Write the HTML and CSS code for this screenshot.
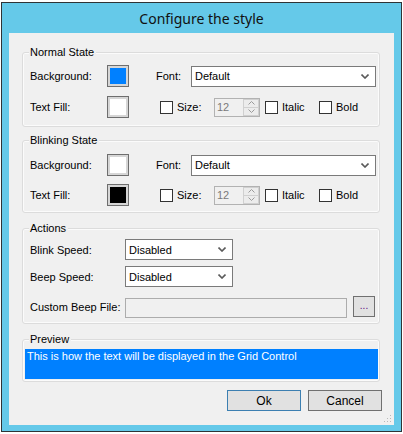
FILE: index.html
```html
<!DOCTYPE html>
<html>
<head>
<meta charset="utf-8">
<link rel="stylesheet" href="styles.css">
</head>
<body>
<div class="window">
  <div class="title">Configure the style</div>
  <div class="content">
    <div class="group g-normal">
      <span class="legend">Normal State</span>
      <div class="row">
        <span class="lbl">Background:</span>
        <span class="swatch"><span class="fill blue"></span></span>
        <span class="font-lbl">Font:</span>
        <span class="combo font-combo"><span class="ctext">Default</span><svg class="chev" width="8" height="5" viewBox="0 0 8 5"><path d="M0.5 0.5 L4 4 L7.5 0.5" fill="none" stroke="#5a5a5a" stroke-width="1.6"/></svg></span>
      </div>
      <div class="row">
        <span class="lbl">Text Fill:</span>
        <span class="swatch"><span class="fill white"></span></span>
        <span class="chk c-size"></span><span class="clbl w-size">Size:</span>
        <span class="spin"><span class="stext">12</span><span class="sbtns"><span class="sb"><svg width="7" height="4" viewBox="0 0 7 4"><path d="M0.5 3.5 L3.5 0.5 L6.5 3.5" fill="none" stroke="#9a9a9a" stroke-width="1"/></svg></span><span class="sb"><svg width="7" height="4" viewBox="0 0 7 4"><path d="M0.5 0.5 L3.5 3.5 L6.5 0.5" fill="none" stroke="#9a9a9a" stroke-width="1"/></svg></span></span></span>
        <span class="chk c-italic"></span><span class="clbl w-italic">Italic</span>
        <span class="chk"></span><span class="clbl">Bold</span>
      </div>
    </div>

    <div class="group g-blink">
      <span class="legend">Blinking State</span>
      <div class="row">
        <span class="lbl">Background:</span>
        <span class="swatch"><span class="fill white"></span></span>
        <span class="font-lbl">Font:</span>
        <span class="combo font-combo"><span class="ctext">Default</span><svg class="chev" width="8" height="5" viewBox="0 0 8 5"><path d="M0.5 0.5 L4 4 L7.5 0.5" fill="none" stroke="#5a5a5a" stroke-width="1.6"/></svg></span>
      </div>
      <div class="row">
        <span class="lbl">Text Fill:</span>
        <span class="swatch"><span class="fill black"></span></span>
        <span class="chk c-size"></span><span class="clbl w-size">Size:</span>
        <span class="spin"><span class="stext">12</span><span class="sbtns"><span class="sb"><svg width="7" height="4" viewBox="0 0 7 4"><path d="M0.5 3.5 L3.5 0.5 L6.5 3.5" fill="none" stroke="#9a9a9a" stroke-width="1"/></svg></span><span class="sb"><svg width="7" height="4" viewBox="0 0 7 4"><path d="M0.5 0.5 L3.5 3.5 L6.5 0.5" fill="none" stroke="#9a9a9a" stroke-width="1"/></svg></span></span></span>
        <span class="chk c-italic"></span><span class="clbl w-italic">Italic</span>
        <span class="chk"></span><span class="clbl">Bold</span>
      </div>
    </div>

    <div class="group g-actions">
      <span class="legend">Actions</span>
      <div class="arow">
        <span class="alb">Blink Speed:</span>
        <span class="combo small-combo"><span class="ctext">Disabled</span><svg class="chev" width="8" height="5" viewBox="0 0 8 5"><path d="M0.5 0.5 L4 4 L7.5 0.5" fill="none" stroke="#5a5a5a" stroke-width="1.6"/></svg></span>
      </div>
      <div class="arow">
        <span class="alb">Beep Speed:</span>
        <span class="combo small-combo"><span class="ctext">Disabled</span><svg class="chev" width="8" height="5" viewBox="0 0 8 5"><path d="M0.5 0.5 L4 4 L7.5 0.5" fill="none" stroke="#5a5a5a" stroke-width="1.6"/></svg></span>
      </div>
      <div class="arow frow">
        <span class="alb">Custom Beep File:</span>
        <span class="tbox"></span>
        <span class="dots">...</span>
      </div>
    </div>

    <div class="group g-preview">
      <span class="legend">Preview</span>
      <div class="pbox">This is how the text will be displayed in the Grid Control</div>
    </div>

    <div class="buttons">
      <span class="btn ok">Ok</span>
      <span class="btn">Cancel</span>
    </div>
    <svg class="grip" width="8" height="8" viewBox="0 0 8 8">
      <rect x="6" y="0" width="1" height="1" fill="#b8b8b8"/>
      <rect x="3" y="3" width="1" height="1" fill="#b8b8b8"/>
      <rect x="6" y="3" width="1" height="1" fill="#b8b8b8"/>
      <rect x="0" y="6" width="1" height="1" fill="#b8b8b8"/>
      <rect x="3" y="6" width="1" height="1" fill="#b8b8b8"/>
      <rect x="6" y="6" width="1" height="1" fill="#b8b8b8"/>
    </svg>
  </div>
</div>
</body>
</html>
```

FILE: styles.css
```css
html, body {
  margin: 0;
  padding: 0;
  background: #ffffff;
}
body {
  font-family: "Liberation Sans", Arial, sans-serif;
  font-size: 11px;
  color: #000;
  width: 403px;
  height: 434px;
  overflow: hidden;
}
.window {
  margin: 2px 0 0 1px;
  width: 401px;
  height: 430px;
  box-sizing: border-box;
  border: 1px solid #2f3336;
  background: #65c9e9;
  padding: 0 7px 6px 7px;
  display: flex;
  flex-direction: column;
}
.title {
  height: 30px;
  display: flex;
  align-items: center;
  justify-content: center;
  font-family: "Noto Sans", "Open Sans", sans-serif;
  font-size: 14px;
  color: #111;
  padding-top: 1px;
  box-sizing: border-box;
}
.content {
  position: relative;
  height: 392px;
  background: #f0f0f0;
  box-sizing: border-box;
  padding: 19px 14px 0 13px;
  display: flex;
  flex-direction: column;
}
.group {
  position: relative;
  border: 1px solid #dcdcdc;
  border-radius: 3px;
  box-shadow: inset 0 0 0 1px #fbfbfb;
  display: flex;
  flex-direction: column;
  box-sizing: border-box;
}
.legend {
  position: absolute;
  left: 6px;
  top: -8px;
  padding: 0 2px 0 1px;
  background: #f0f0f0;
  line-height: 14px;
}
.g-normal { height: 75px; padding: 11px 0 0 7px; gap: 7px; }
.g-blink { height: 73px; margin-top: 13px; padding: 12px 0 0 7px; gap: 6px; }
.g-actions { height: 96px; margin-top: 15px; padding: 10px 0 0 7px; }
.g-preview { height: 43px; margin-top: 15px; padding: 9px 1px 0 2px; }

.row {
  display: flex;
  align-items: center;
  height: 24px;
}
.lbl { width: 77px; }
.swatch {
  width: 22px;
  height: 22px;
  box-sizing: border-box;
  border: 1px solid #6e6e6e;
  background: #d6d6d6;
  padding: 2px;
  display: flex;
}
.fill { flex: 1; }
.fill.blue { background: #0080ff; }
.fill.white { background: #ffffff; }
.fill.black { background: #000000; }
.font-lbl { margin-left: 27px; width: 35px; }
.combo {
  position: relative;
  box-sizing: border-box;
  background: #fff;
  border: 1px solid #7a7a7a;
  display: flex;
  align-items: center;
}
.font-combo { width: 185px; height: 21px; }
.ctext { padding-left: 3px; flex: 1; }
.chev { margin-right: 6px; }
.chk {
  width: 13px;
  height: 13px;
  box-sizing: border-box;
  border: 1px solid #333;
  background: #fff;
}
.c-size { margin-left: 31px; }
.clbl { margin-left: 4px; }
.w-size { width: 37px; }
.w-italic { width: 37px; }
.c-italic { margin-left: 5px; }
.spin {
  width: 46px;
  height: 19px;
  box-sizing: border-box;
  border: 1px solid #b2b2b2;
  background: #f0f0f0;
  display: flex;
}
.stext { flex: 1; color: #7a7a7a; padding-left: 2px; line-height: 17px; }
.sbtns {
  width: 16px;
  display: flex;
  flex-direction: column;
}
.sb {
  flex: 1;
  border: 1px solid #d0d0d0;
  background: #ececec;
  display: flex;
  align-items: center;
  justify-content: center;
}
.sb + .sb { border-top: none; }

.arow {
  display: flex;
  align-items: center;
  height: 21px;
}
.arow + .arow { margin-top: 6px; }
.arow.frow { margin-top: 9px; }
.alb { width: 95px; }
.small-combo { width: 108px; height: 21px; }
.tbox {
  width: 222px;
  height: 20px;
  margin-top: 2px;
  box-sizing: border-box;
  border: 1px solid #acacac;
  background: #f0f0f0;
}
.dots {
  margin-left: 6px;
  width: 22px;
  height: 21px;
  box-sizing: border-box;
  border: 1px solid #707070;
  background: #e1e1e1;
  display: flex;
  justify-content: center;
  align-items: center;
  color: #5a0a7a;
  font-size: 10px;
  padding-bottom: 3px;
}
.pbox {
  height: 30px;
  background: #0080ff;
  color: #fff;
  padding: 1px 2px;
  box-sizing: border-box;
  line-height: 13px;
}
.buttons {
  display: flex;
  justify-content: flex-end;
  gap: 7px;
  margin-top: 8px;
  margin-right: -2px;
}
.btn {
  width: 74px;
  height: 21px;
  box-sizing: border-box;
  border: 1px solid #707070;
  background: #e1e1e1;
  display: flex;
  align-items: center;
  justify-content: center;
  font-size: 12px;
}
.btn.ok { border-color: #3c7fb1; }
.grip {
  position: absolute;
  right: 2px;
  bottom: 2px;
}
```
